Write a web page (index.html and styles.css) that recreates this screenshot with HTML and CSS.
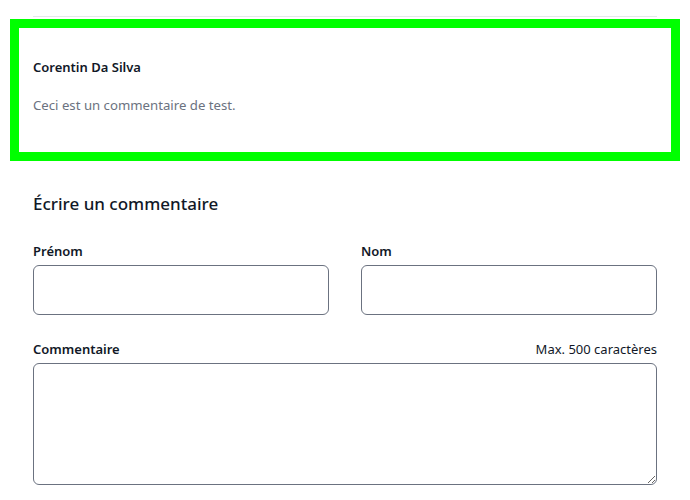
FILE: index.html
```html
<!DOCTYPE html>
<html lang="fr">
<head>
<meta charset="utf-8">
<link rel="stylesheet" href="styles.css">
</head>
<body>
<div class="list-top"></div>
<article class="comment">
  <p class="comment-author">Corentin Da Silva</p>
  <p class="comment-body">Ceci est un commentaire de test.</p>
</article>
<section class="form">
  <h2 class="form-title">Écrire un commentaire</h2>
  <div class="row">
    <div class="field">
      <label class="label" for="prenom">Prénom</label>
      <input class="input" id="prenom" type="text">
    </div>
    <div class="field">
      <label class="label" for="nom">Nom</label>
      <input class="input" id="nom" type="text">
    </div>
  </div>
  <div class="field field-wide">
    <div class="label-row">
      <label class="label" for="commentaire">Commentaire</label>
      <span class="hint">Max. 500 caractères</span>
    </div>
    <textarea class="textarea" id="commentaire"></textarea>
  </div>
</section>
</body>
</html>
```
FILE: styles.css
```css
* { box-sizing: border-box; }
html, body { margin: 0; padding: 0; background: #fff; }
body {
  font-family: "Noto Sans", "Open Sans", sans-serif;
  color: #111827;
  font-size: 14px;
  line-height: 20px;
}
.list-top {
  margin: 16px 33px 0;
  height: 1px;
  background: #e5e7eb;
}
.comment {
  margin: 2px 10px 0;
  border: 9px solid #00ff00;
  padding: 29px 14px 37px;
}
.comment p { margin: 0; }
.comment-author {
  font-weight: 600;
  font-size: 13px;
  color: #111827;
}
.comment-body {
  margin-top: 18px !important;
  color: #6b7280;
  font-size: 13.2px;
}
.form {
  padding: 29px 33px 0;
}
.form-title {
  margin: 0;
  font-size: 17px;
  line-height: 28px;
  font-weight: 500;
}
.row {
  margin-top: 23px;
  display: grid;
  grid-template-columns: 1fr 1fr;
  column-gap: 32px;
}
.field { display: flex; flex-direction: column; }
.label {
  font-size: 13px;
  font-weight: 600;
  line-height: 20px;
  margin-bottom: 4px;
}
.input {
  height: 50px;
  border: 1px solid #6b7280;
  border-radius: 6px;
  font: inherit;
  padding: 8px 12px;
}
.field-wide { margin-top: 24px; }
.label-row {
  display: flex;
  justify-content: space-between;
  align-items: baseline;
}
.hint {
  font-size: 13px;
  color: #111827;
}
.textarea {
  height: 122px;
  border: 1px solid #6b7280;
  border-radius: 6px;
  font: inherit;
  padding: 8px 12px;
  resize: vertical;
}
```
